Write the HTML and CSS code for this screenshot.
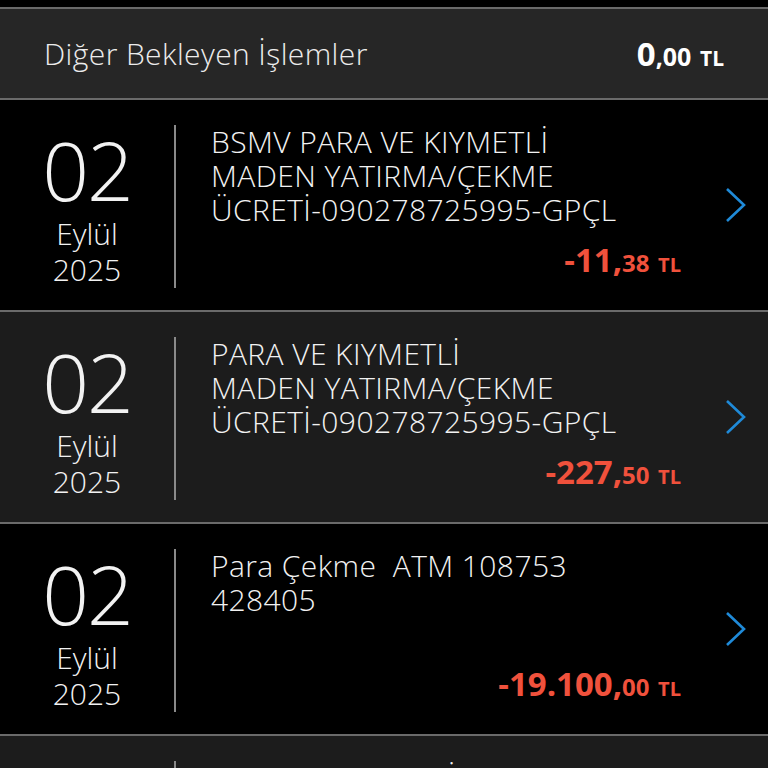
FILE: index.html
```html
<!DOCTYPE html>
<html lang="tr">
<head>
  <meta charset="UTF-8">
  <meta name="viewport" content="width=device-width, initial-scale=1.0">
  <title>Hesap Hareketleri</title>
  <link rel="stylesheet" href="styles.css">
</head>
<body>
  <div class="screen">

    <div class="pending">
      <span class="pending-title">Diğer Bekleyen İşlemler</span>
      <span class="pending-amount">0<small>,00</small> <em>TL</em></span>
    </div>

    <ul class="tx-list">
      <li class="tx">
        <div class="tx-date">
          <span class="day">02</span>
          <span class="month">Eylül</span>
          <span class="year">2025</span>
        </div>
        <div class="tx-body">
          <p class="tx-desc">BSMV PARA VE KIYMETLİ<br>MADEN YATIRMA/ÇEKME<br>ÜCRETİ-090278725995-GPÇL</p>
          <p class="tx-amount">-11,<small>38</small> <em>TL</em></p>
        </div>
        <div class="tx-arrow">
          <svg width="22" height="36" viewBox="0 0 22 36"><path d="M2 2 L19 18 L2 34" fill="none" stroke="#1f8ad8" stroke-width="2.6"/></svg>
        </div>
      </li>

      <li class="tx">
        <div class="tx-date">
          <span class="day">02</span>
          <span class="month">Eylül</span>
          <span class="year">2025</span>
        </div>
        <div class="tx-body">
          <p class="tx-desc">PARA VE KIYMETLİ<br>MADEN YATIRMA/ÇEKME<br>ÜCRETİ-090278725995-GPÇL</p>
          <p class="tx-amount">-227,<small>50</small> <em>TL</em></p>
        </div>
        <div class="tx-arrow">
          <svg width="22" height="36" viewBox="0 0 22 36"><path d="M2 2 L19 18 L2 34" fill="none" stroke="#1f8ad8" stroke-width="2.6"/></svg>
        </div>
      </li>

      <li class="tx">
        <div class="tx-date">
          <span class="day">02</span>
          <span class="month">Eylül</span>
          <span class="year">2025</span>
        </div>
        <div class="tx-body">
          <p class="tx-desc">Para Çekme&nbsp; ATM 108753<br>428405</p>
          <p class="tx-amount">-19.100,<small>00</small> <em>TL</em></p>
        </div>
        <div class="tx-arrow">
          <svg width="22" height="36" viewBox="0 0 22 36"><path d="M2 2 L19 18 L2 34" fill="none" stroke="#1f8ad8" stroke-width="2.6"/></svg>
        </div>
      </li>

      <li class="tx">
        <div class="tx-date">
          <span class="day">02</span>
          <span class="month">Eylül</span>
          <span class="year">2025</span>
        </div>
        <div class="tx-body">
          <p class="tx-desc">POS SATIŞ - TERSİ BAY<br>MAĞAZACILIK</p>
          <p class="tx-amount">-450,<small>00</small> <em>TL</em></p>
        </div>
        <div class="tx-arrow">
          <svg width="22" height="36" viewBox="0 0 22 36"><path d="M2 2 L19 18 L2 34" fill="none" stroke="#1f8ad8" stroke-width="2.6"/></svg>
        </div>
      </li>
    </ul>

  </div>
</body>
</html>
```

FILE: styles.css
```css
html, body {
  margin: 0;
  padding: 0;
  background: #000;
}

body {
  font-family: "Open Sans", "Noto Sans", sans-serif;
  color: #f2f2f2;
  overflow: hidden;
}

.screen {
  padding-top: 7px;
}

.pending {
  display: flex;
  align-items: center;
  justify-content: space-between;
  height: 89px;
  padding: 0 44px 0 44px;
  background: #262626;
  border-top: 2px solid #6a6a6a;
  border-bottom: 2px solid #6a6a6a;
}

.pending-title {
  font-size: 30px;
  font-weight: 300;
  letter-spacing: 0.4px;
  color: #ececec;
}

.pending-amount {
  font-size: 33px;
  font-weight: 700;
  color: #fff;
}

.pending-amount small {
  font-size: 25px;
}

.pending-amount em {
  font-style: normal;
  font-size: 21px;
}

.tx-list {
  list-style: none;
  margin: 0;
  padding: 0;
}

.tx {
  display: flex;
  height: 210px;
  border-bottom: 2px solid #6a6a6a;
  background: #000;
}

.tx:nth-child(even) {
  background: #1c1c1c;
}

.tx-date {
  display: flex;
  flex-direction: column;
  align-items: center;
  justify-content: center;
  width: 174px;
  margin: 25px 0 22px;
  border-right: 2px solid #8a8a8a;
  font-weight: 300;
}

.day {
  font-size: 82px;
  line-height: 86px;
  letter-spacing: -2px;
}

.month,
.year {
  font-size: 30px;
  line-height: 36px;
}

.month {
  margin-top: 4px;
}

.tx-body {
  flex: 1;
  display: flex;
  flex-direction: column;
  justify-content: space-between;
  padding: 25px 0 28px 35px;
}

.tx-desc {
  margin: 0;
  font-size: 30px;
  font-weight: 300;
  line-height: 34px;
  letter-spacing: 0.4px;
  white-space: nowrap;
}

.tx-amount {
  margin: 0;
  text-align: right;
  font-size: 33px;
  font-weight: 700;
  line-height: 34px;
  color: #f0513c;
}

.tx-amount small {
  font-size: 24px;
}

.tx-amount em {
  font-style: normal;
  font-size: 20px;
}

.tx-arrow {
  display: flex;
  align-items: center;
  width: 87px;
  padding-left: 44px;
  box-sizing: border-box;
}
```
